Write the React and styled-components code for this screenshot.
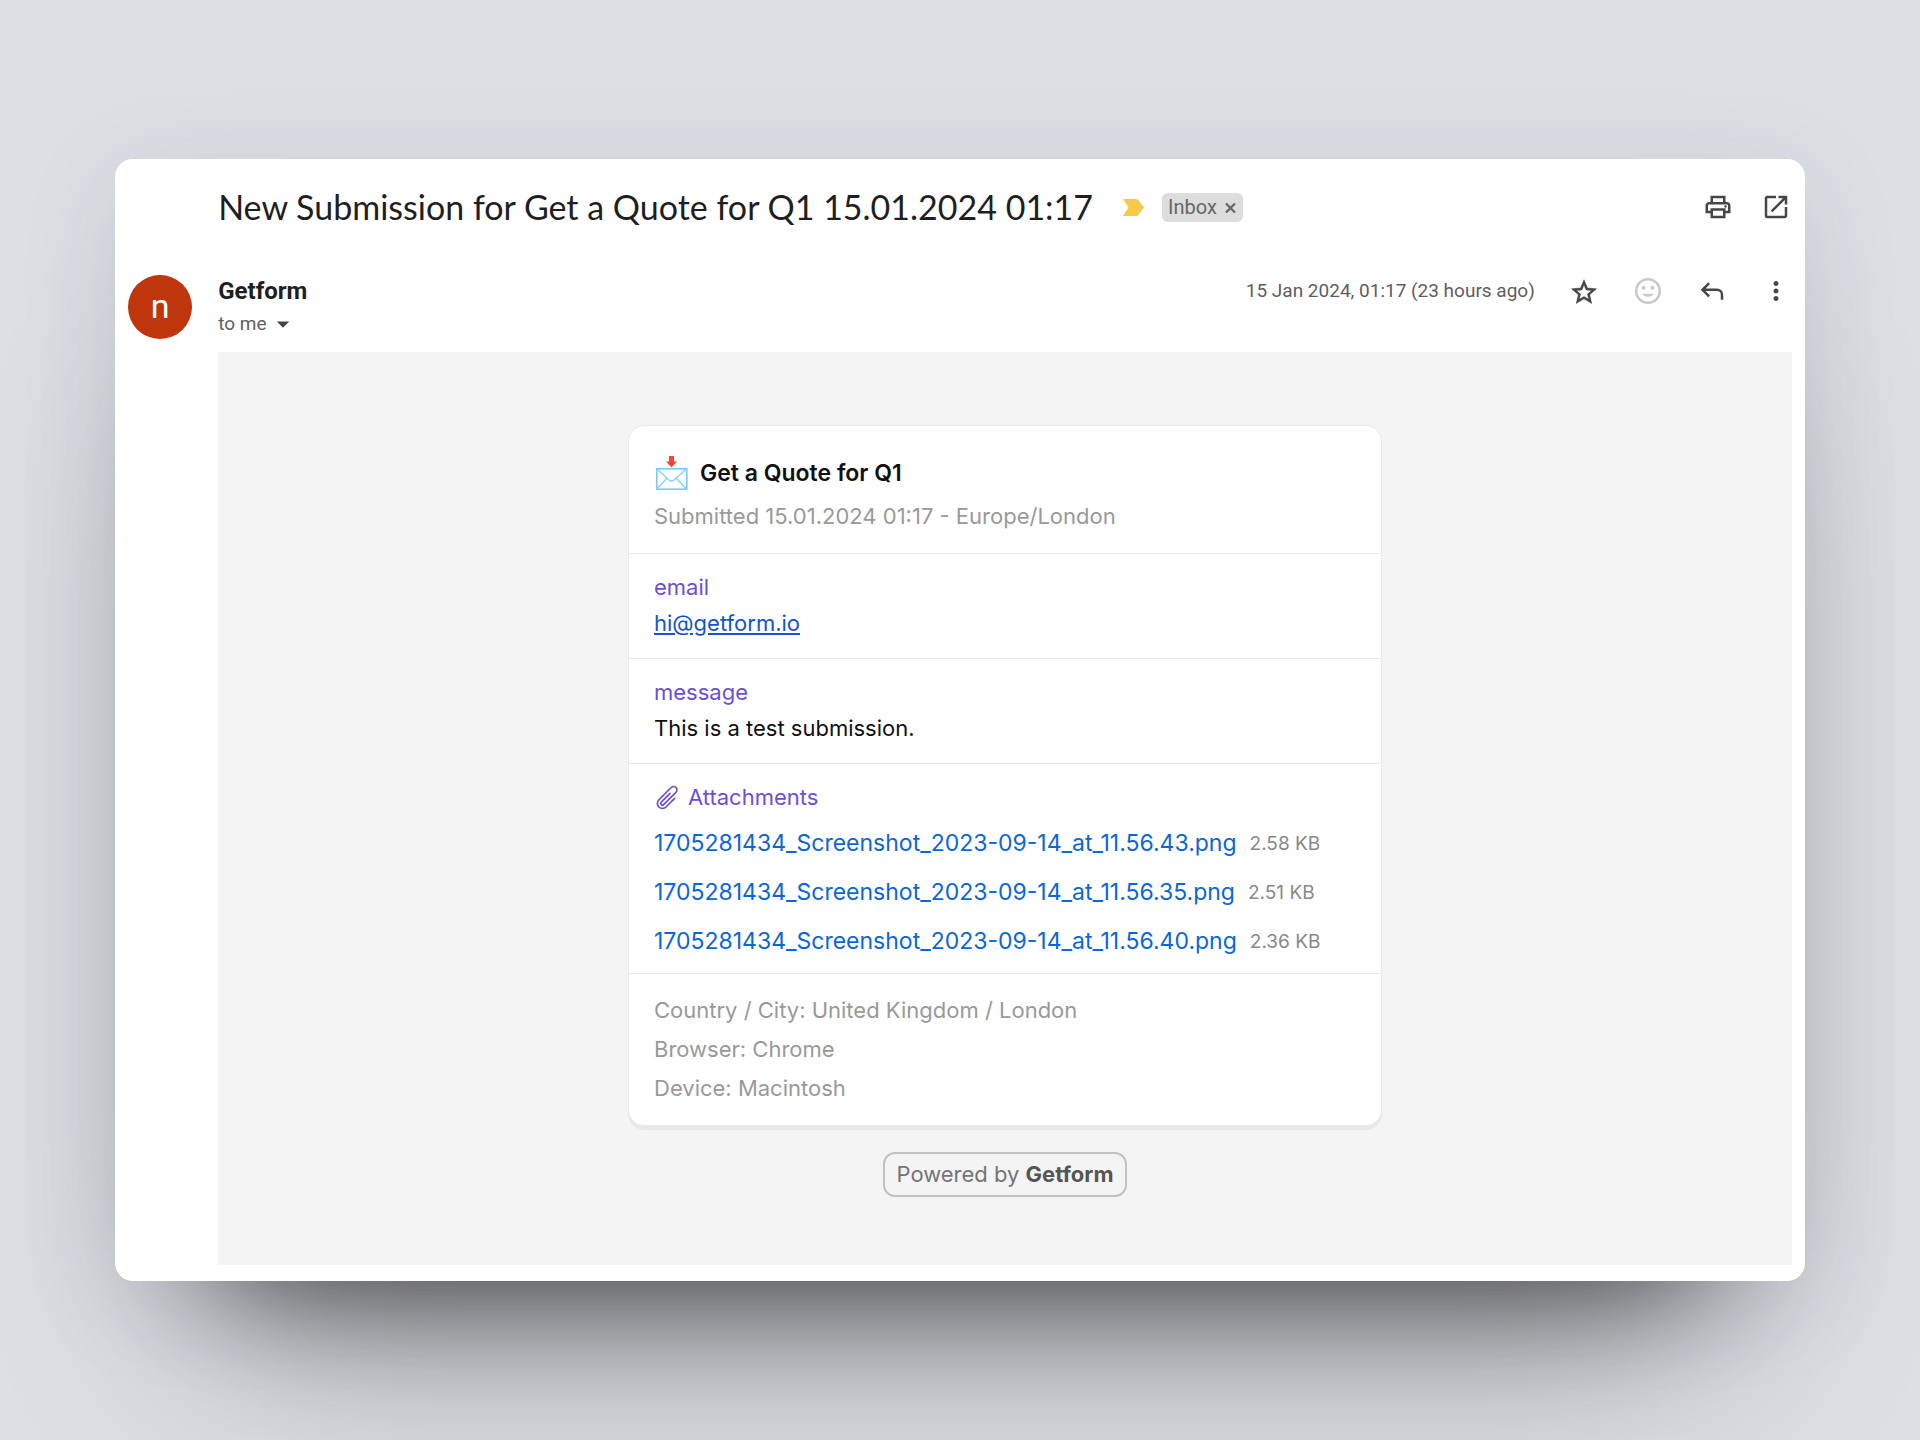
import React from 'react'
import styled, { createGlobalStyle } from 'styled-components'
import { MdOutlinePrint, MdOpenInNew, MdMoreVert, MdArrowDropDown } from 'react-icons/md'
import { HiOutlinePaperClip } from 'react-icons/hi2'

const titleFont = `Lato, "Open Sans", sans-serif`
const mailFont = `Roboto, "Open Sans", sans-serif`
const bodyFont = `Inter, Roboto, sans-serif`

const GlobalStyle = createGlobalStyle`
    * {
        box-sizing: border-box;
    }
    body {
        margin: 0;
        background: #dce0e5;
        font-family: ${bodyFont};
    }
    h1, h2, p, ul {
        margin: 0;
        padding: 0;
    }
`

const Page = styled.div`
    min-height: 100vh;
    padding: 0 6%;
    overflow: hidden;
    display: flex;
    align-items: center;
    justify-content: center;
`

const MailWindow = styled.main`
    width: 100%;
    max-width: 1690px;
    padding: 0 13px 16px;
    background: #fff;
    border-radius: 18px;
    font-family: ${mailFont};
    box-shadow:
        0 115px 100px -110px rgba(0, 0, 0, .42),
        0 140px 200px -100px rgba(0, 0, 0, .45),
        0 20px 100px rgba(40, 45, 55, .12);
`

const SubjectBar = styled.header`
    min-height: 96px;
    padding-left: 90px;
    display: flex;
    align-items: center;
`

const Subject = styled.h1`
    font-family: ${titleFont};
    font-size: 34px;
    font-weight: 400;
    line-height: 44px;
    color: #1f1f1f;
`

const Marker = styled.svg`
    width: 21px;
    height: 17px;
    margin: 0 18px 0 30px;
`

const Label = styled.span`
    height: 29px;
    padding: 0 7px 0 6px;
    display: flex;
    align-items: center;
    gap: 8px;
    border-radius: 6px;
    background: #ddd;
    color: #666;
    font-size: 20px;
`

const PlainButton = styled.button`
    padding: 0;
    border: 0;
    display: flex;
    background: none;
    color: ${({ $color }) => $color || '#444746'};
    font-size: 30px;
    cursor: pointer;
`

const Actions = styled.div`
    margin-left: auto;
    padding-right: 1px;
    display: flex;
    align-items: center;
    gap: ${({ $gap }) => $gap}px;
`

const SenderBar = styled.section`
    min-height: 97px;
    padding-top: 20px;
    display: flex;
    align-items: flex-start;
`

const Avatar = styled.div`
    width: 64px;
    height: 64px;
    margin-right: 26px;
    border-radius: 50%;
    background: #bf360c;
    color: #fff;
    font-size: 34px;
    line-height: 62px;
    text-align: center;
`

const SenderName = styled.p`
    font-size: 24px;
    font-weight: 700;
    line-height: 32px;
    color: #1f1f1f;
`

const Recipient = styled.div`
    display: flex;
    align-items: center;
    gap: 1px;
    color: #5e5e5e;
    font-size: 19px;
    line-height: 34px;
`

const SentAt = styled.time`
    color: #5e5e5e;
    font-size: 19px;
    line-height: 32px;
`

const MessageBody = styled.section`
    margin-left: 90px;
    padding: 73px 20px 68px;
    display: flex;
    flex-direction: column;
    align-items: center;
    background: #f4f4f4;
    font-family: ${bodyFont};
`

const Card = styled.article`
    width: 100%;
    max-width: 754px;
    border: 1px solid #ebebeb;
    border-radius: 16px;
    background: #fff;
    box-shadow: 0 4px 0 #e8e8e8;
    font-size: 22px;
    line-height: 36px;
`

const Block = styled.section`
    padding: ${({ $pad }) => $pad || '16px 25px 17px'};

    & + & {
        border-top: 1px solid #ebebeb;
    }
`

const CardTitle = styled.h2`
    display: flex;
    align-items: center;
    gap: 11px;
    font-size: 23px;
    font-weight: 600;
    line-height: 44px;
    color: #111;
`

const Muted = styled.p`
    color: #999;
    line-height: ${({ $line }) => $line || 39}px;
`

const FieldName = styled.h2`
    display: flex;
    align-items: center;
    gap: 7px;
    color: #6b4fd8;
    font-size: 22px;
    font-weight: 400;
    line-height: 35px;
`

const Value = styled.p`
    color: #111;
`

const MailLink = styled.a`
    color: #1155cc;
`

const FileList = styled.ul`
    padding-top: 4px;
    list-style: none;
`

const FileItem = styled.li`
    display: flex;
    align-items: center;
    gap: 13px;
    line-height: 49px;
`

const FileLink = styled.a`
    color: #0b66d8;
    font-size: 23px;
    text-decoration: none;
`

const FileSize = styled.span`
    color: #888;
    font-size: 19px;
`

const Powered = styled.a`
    margin-top: 26px;
    padding: 0 11px;
    border: 2px solid #c2c2c2;
    border-radius: 12px;
    color: #757575;
    font-size: 22px;
    line-height: 41px;
    text-decoration: none;

    strong {
        color: #555;
        font-weight: 700;
    }
`

const files = [
    { name: '1705281434_Screenshot_2023-09-14_at_11.56.43.png', size: '2.58 KB' },
    { name: '1705281434_Screenshot_2023-09-14_at_11.56.35.png', size: '2.51 KB' },
    { name: '1705281434_Screenshot_2023-09-14_at_11.56.40.png', size: '2.36 KB' },
]

const EnvelopeIcon = () => (
    <svg width='35' height='34' viewBox='0 0 35 34' aria-hidden='true'>
        <path d='M15 0h5v5.500h3L17.500 11.500 12 5.500h3z' fill='#ff4133' />
        <rect x='2.800' y='12.800' width='30' height='20.400' fill='#fcfeff' stroke='#7cc8f8' strokeWidth='1.600' />
        <path d='M3 13l12 11q2.500 2 5 0L32.500 13M3 33l10-11M32.500 33L22 22' fill='none' stroke='#8ad0fa' strokeWidth='1.400' />
    </svg>
)

const CloseIcon = () => (
    <svg width='11' height='11' viewBox='0 0 11 11' aria-hidden='true'>
        <path d='M1 1.500l9 9M10 1.500l-9 9' stroke='currentColor' strokeWidth='2.200' />
    </svg>
)

const StarIcon = () => (
    <svg width='30' height='30' viewBox='0 -1 24 24' aria-hidden='true'>
        <path
            d='M22 9.240l-7.190-.620L12 2 9.190 8.630 2 9.240l5.460 4.730L5.820 21 12 17.270 18.180 21l-1.630-7.030L22 9.240zM12 15.400l-3.760 2.270 1-4.280-3.320-2.880 4.380-.380L12 6.100l1.710 4.040 4.380.380-3.320 2.880 1 4.280L12 15.400z'
            fill='currentColor'
            stroke='currentColor'
            strokeWidth='.400'
        />
    </svg>
)

const SmileIcon = () => (
    <svg width='30' height='30' viewBox='0 0 30 30' aria-hidden='true'>
        <circle cx='15' cy='15' r='11.800' fill='none' stroke='currentColor' strokeWidth='2.400' />
        <circle cx='10.500' cy='11.800' r='2' fill='currentColor' />
        <circle cx='19.500' cy='11.800' r='2' fill='currentColor' />
        <path d='M9.500 17.800h11a5.700 4 0 0 1-11 0z' fill='currentColor' />
    </svg>
)

const ReplyIcon = () => (
    <svg width='30' height='30' viewBox='0 0 24 24' aria-hidden='true'>
        <path d='M19 19v-4a3 3 0 0 0-3-3H6.800l3.600 3.600L9 17l-6-6 6-6 1.400 1.400L6.800 10H16a5 5 0 0 1 5 5v4z' fill='currentColor' />
    </svg>
)

const App = () => {
    return (
        <Page>
            <GlobalStyle />
            <MailWindow>
                <SubjectBar>
                    <Subject>New Submission for Get a Quote for Q1 15.01.2024 01:17</Subject>
                    <Marker viewBox='0 0 21 17' aria-hidden='true'>
                        <path d='M0 0h13q1.500 0 2.500 1.500L21 8.500l-5.500 7Q14.500 17 13 17H0l5.500-8.500z' fill='#f7c948' />
                    </Marker>
                    <Label>
                        Inbox
                        <PlainButton $color='#666' aria-label='Remove label'><CloseIcon /></PlainButton>
                    </Label>
                    <Actions $gap={28}>
                        <PlainButton aria-label='Print'><MdOutlinePrint /></PlainButton>
                        <PlainButton aria-label='Open in new window'><MdOpenInNew /></PlainButton>
                    </Actions>
                </SubjectBar>

                <SenderBar>
                    <Avatar>n</Avatar>
                    <div>
                        <SenderName>Getform</SenderName>
                        <Recipient>
                            to me
                            <PlainButton aria-label='Show details'><MdArrowDropDown /></PlainButton>
                        </Recipient>
                    </div>
                    <Actions $gap={34}>
                        <SentAt>15 Jan 2024, 01:17 (23 hours ago)</SentAt>
                        <PlainButton aria-label='Star'><StarIcon /></PlainButton>
                        <PlainButton $color='#c8c8c8' aria-label='Add reaction'><SmileIcon /></PlainButton>
                        <PlainButton aria-label='Reply'><ReplyIcon /></PlainButton>
                        <PlainButton aria-label='More'><MdMoreVert /></PlainButton>
                    </Actions>
                </SenderBar>

                <MessageBody>
                    <Card>
                        <Block $pad='25px 25px 16px'>
                            <CardTitle><EnvelopeIcon />Get a Quote for Q1</CardTitle>
                            <Muted $line={42}>Submitted 15.01.2024 01:17 - Europe/London</Muted>
                        </Block>
                        <Block>
                            <FieldName>email</FieldName>
                            <Value><MailLink href='mailto:hi@getform.io'>hi@getform.io</MailLink></Value>
                        </Block>
                        <Block>
                            <FieldName>message</FieldName>
                            <Value>This is a test submission.</Value>
                        </Block>
                        <Block $pad='16px 25px 7px'>
                            <FieldName><HiOutlinePaperClip size={27} />Attachments</FieldName>
                            <FileList>
                                {files.map((file) => (
                                    <FileItem key={file.name}>
                                        <FileLink href='#'>{file.name}</FileLink>
                                        <FileSize>{file.size}</FileSize>
                                    </FileItem>
                                ))}
                            </FileList>
                        </Block>
                        <Block $pad='17px 25px'>
                            <Muted>Country / City: United Kingdom / London</Muted>
                            <Muted>Browser: Chrome</Muted>
                            <Muted>Device: Macintosh</Muted>
                        </Block>
                    </Card>
                    <Powered href='#'>Powered by <strong>Getform</strong></Powered>
                </MessageBody>
            </MailWindow>
        </Page>
    )
}

export default App;
